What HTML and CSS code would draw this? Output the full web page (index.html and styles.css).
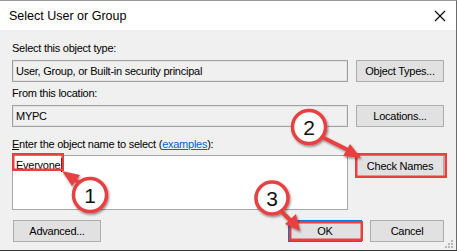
FILE: index.html
```html
<!DOCTYPE html>
<html>
<head>
<meta charset="utf-8">
<link rel="stylesheet" href="styles.css">
</head>
<body>
<div class="window">
  <div class="titlebar">
    <span class="title">Select User or Group</span>
    <svg class="close" width="12" height="12" viewBox="0 0 12 12"><path d="M1 1 L11 11 M11 1 L1 11" stroke="#000" stroke-width="1.1" fill="none"/></svg>
  </div>
  <div class="content">
    <div class="label l1">Select this object type:</div>
    <div class="row r1">
      <div class="field ro">User, Group, or Built-in security principal</div>
      <div class="btn">Object Types...</div>
    </div>
    <div class="label l2">From this location:</div>
    <div class="row r2">
      <div class="field ro">MYPC</div>
      <div class="btn">Locations...</div>
    </div>
    <div class="label l3"><u>E</u>nter the object name to select (<a class="link">examples</a>):</div>
    <div class="row r3">
      <div class="field area"><span class="typed">Everyone</span></div>
      <div class="btn">Check Names</div>
    </div>
    <div class="footer">
      <div class="btn adv">Advanced...</div>
      <div class="spacer"></div>
      <div class="btn small default">OK</div>
      <div class="btn small">Cancel</div>
    </div>
  </div>
  <svg class="grip" width="8" height="8" viewBox="0 0 8 8">
    <rect x="6" y="0" width="2" height="2" fill="#b8b8b8"/>
    <rect x="3" y="3" width="2" height="2" fill="#b8b8b8"/>
    <rect x="6" y="3" width="2" height="2" fill="#b8b8b8"/>
    <rect x="0" y="6" width="2" height="2" fill="#b8b8b8"/>
    <rect x="3" y="6" width="2" height="2" fill="#b8b8b8"/>
    <rect x="6" y="6" width="2" height="2" fill="#b8b8b8"/>
  </svg>
  <svg class="annot" width="457" height="251" viewBox="0 0 457 251">
    <defs>
      <filter id="sh" x="-30%" y="-30%" width="160%" height="160%">
        <feDropShadow dx="1" dy="1.5" stdDeviation="1.2" flood-color="#000" flood-opacity="0.45"/>
      </filter>
    </defs>
    <g fill="none" stroke="#e8403f" stroke-width="2.5">
      <rect x="13.25" y="154.25" width="49.5" height="15.5"/>
      <rect x="356.25" y="154.25" width="89.5" height="22.5"/>
      <rect x="290.25" y="222.25" width="71.5" height="17.5"/>
    </g>
    <g filter="url(#sh)">
      <line x1="80" y1="183" x2="70" y2="177" stroke="#e8403f" stroke-width="4"/>
      <polygon points="62,171 80,175 72,186" fill="#e8403f"/>
      <circle cx="90" cy="195" r="16.5" fill="#fff" stroke="#e8403f" stroke-width="3.5"/>
    </g>
    <g filter="url(#sh)">
      <line x1="322" y1="137" x2="350" y2="151" stroke="#e8403f" stroke-width="4"/>
      <polygon points="361,158 343,156 350,144" fill="#e8403f"/>
      <circle cx="309" cy="127" r="16.5" fill="#fff" stroke="#e8403f" stroke-width="3.5"/>
    </g>
    <g filter="url(#sh)">
      <line x1="280" y1="210" x2="292" y2="222" stroke="#e8403f" stroke-width="4"/>
      <polygon points="300,231 285,224 296,214" fill="#e8403f"/>
      <circle cx="272" cy="198" r="16" fill="#fff" stroke="#e8403f" stroke-width="3.5"/>
    </g>
    <g class="num" font-family="Liberation Sans, Arial, sans-serif" font-size="21" fill="#111" text-anchor="middle">
      <text x="90" y="203">1</text>
      <text x="309" y="135">2</text>
      <text x="272" y="206">3</text>
    </g>
  </svg>
</div>
</body>
</html>
```

FILE: styles.css
```css
* { box-sizing: border-box; }
html, body { margin: 0; padding: 0; }
body {
  width: 457px;
  height: 251px;
  overflow: hidden;
  background: #3a3a3a;
  font-family: "Liberation Sans", Arial, sans-serif;
  font-size: 11px;
  color: #000;
}
.window {
  position: relative;
  width: 457px;
  height: 250px;
  background: #f0f0f0;
  border-right: 1px solid #6b6b6b;
  border-top: 1px solid #9a9a9a;
}
.titlebar {
  height: 29px;
  background: #fff;
  display: flex;
  align-items: center;
  padding-left: 9px;
  padding-right: 10px;
}
.title {
  font-size: 12.5px;
  flex: 1;
  margin-top: 1px;
}
.close { display: block; }
.content {
  padding: 0 12px 0 12px;
  letter-spacing: -0.25px;
}
.label {
  height: 13px;
  line-height: 13px;
}
.l1 { margin-top: 12px; }
.l2 { margin-top: 5px; }
.l3 { margin-top: 11px; }
.row {
  display: grid;
  grid-template-columns: 336px 88px;
  column-gap: 8px;
  align-items: start;
}
.r1, .r2 { margin-top: 5px; height: 22px; }
.r3 { margin-top: 4px; }
.field {
  height: 22px;
  border: 1px solid #a0a0a0;
  padding: 0 3px;
  line-height: 20px;
  white-space: nowrap;
}
.ro {
  background: #f0f0f0;
  box-shadow: inset 0 0 0 1px #e3e3e3;
}
.area {
  height: 55px;
  background: #fff;
  border-color: #a6a6a6;
  line-height: 14px;
  padding-top: 2px;
}
.typed {
  display: inline-block;
  border-right: 1px solid #000;
  padding-right: 1px;
}
.btn {
  height: 22px;
  background: #e1e1e1;
  border: 1px solid #adadad;
  text-align: center;
  line-height: 20px;
  white-space: nowrap;
}
.link {
  color: #0066cc;
  text-decoration: underline;
}
.footer {
  display: flex;
  margin-top: 10px;
  column-gap: 8px;
}
.adv { width: 88px; margin-left: 1px; }
.spacer { flex: 1; }
.small { width: 74px; }
.default { border-color: #0078d7; }
.grip {
  position: absolute;
  right: 3px;
  bottom: 2px;
}
.annot {
  position: absolute;
  left: 0;
  top: -1px;
  pointer-events: none;
}
```
